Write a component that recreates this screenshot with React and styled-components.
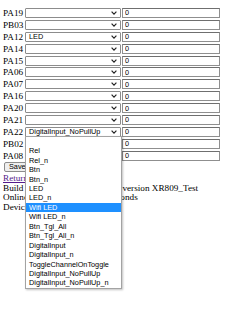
import React from 'react';
import styled, { createGlobalStyle } from 'styled-components';

const GlobalStyle = createGlobalStyle`
  html, body {
    margin: 0;
    padding: 0;
    background: #fff;
  }
  body {
    font-family: 'Liberation Serif', 'Times New Roman', serif;
    font-size: 9.2px;
    color: #000;
  }
`;

const Page = styled.div`
  box-sizing: border-box;
  min-height: 315px;
  padding: 7px 0 0 3px;
`;

const PinList = styled.div`
  display: flex;
  flex-direction: column;
`;

const PinRow = styled.div`
  display: flex;
  align-items: center;
  height: 11.9px;
`;

const PinLabel = styled.span`
  width: 22px;
  white-space: nowrap;
`;

const SelectBox = styled.div`
  position: relative;
  box-sizing: border-box;
  width: 96px;
  height: 10px;
  border: 1px solid #8c8c8c;
  border-radius: 1px;
  background: #fff;
  display: flex;
  align-items: center;
  padding-left: 3px;
  font-family: 'Liberation Sans', Arial, sans-serif;
  font-size: 7.3px;
  color: #000;
`;

const SelectValue = styled.span`
  flex: 1;
  white-space: nowrap;
`;

const Chevron = styled.svg`
  width: 6px;
  height: 4px;
  margin-right: 3px;
`;

const ValueInput = styled.input`
  box-sizing: border-box;
  width: 98px;
  height: 10px;
  margin: 0 0 0 1px;
  padding: 0 2px;
  border: 1px solid #8f8f8f;
  border-top-color: #6f6f6f;
  font-family: 'Liberation Sans', Arial, sans-serif;
  font-size: 7.3px;
  color: #000;
  background: #fff;
  outline: none;
`;

const Popup = styled.ul`
  position: absolute;
  z-index: 10;
  top: 100%;
  left: -1px;
  box-sizing: border-box;
  width: 97px;
  margin: 0;
  padding: 0;
  list-style: none;
  background: #fff;
  border: 1px solid #a3a3a3;
  box-shadow: 1px 1px 2px rgba(0, 0, 0, 0.25);
`;

const Option = styled.li`
  height: 9.45px;
  line-height: 9.45px;
  padding-left: 3px;
  white-space: nowrap;
  background: ${p => (p.$active ? '#1e90ff' : 'transparent')};
  color: ${p => (p.$active ? '#fff' : '#000')};
`;

const ButtonLine = styled.div`
  display: flex;
  align-items: flex-start;
  height: 12.5px;
  padding-left: 1px;
`;

const SaveButton = styled.button`
  box-sizing: border-box;
  height: 10px;
  margin: 0;
  padding: 0 4px;
  border: 1px solid #8c8c8c;
  border-radius: 2px;
  background: #efefef;
  font-family: 'Liberation Sans', Arial, sans-serif;
  font-size: 7.3px;
  line-height: 8px;
  color: #000;
`;

const TextLine = styled.div`
  height: 9.5px;
  line-height: 9.5px;
  white-space: nowrap;
`;

const ReturnLink = styled.a`
  color: #551a8b;
  text-decoration: underline;
`;

const roles = [
  '',
  'Rel',
  'Rel_n',
  'Btn',
  'Btn_n',
  'LED',
  'LED_n',
  'Wifi LED',
  'Wifi LED_n',
  'Btn_Tgl_All',
  'Btn_Tgl_All_n',
  'DigitalInput',
  'DigitalInput_n',
  'ToggleChannelOnToggle',
  'DigitalInput_NoPullUp',
  'DigitalInput_NoPullUp_n',
];

const pins = [
  { name: 'PA19', role: '' },
  { name: 'PB03', role: '' },
  { name: 'PA12', role: 'LED' },
  { name: 'PA14', role: '' },
  { name: 'PA15', role: '' },
  { name: 'PA06', role: '' },
  { name: 'PA07', role: '' },
  { name: 'PA16', role: '' },
  { name: 'PA20', role: '' },
  { name: 'PA21', role: '' },
  { name: 'PA22', role: 'DigitalInput_NoPullUp', open: true },
  { name: 'PB02', role: '' },
  { name: 'PA08', role: '' },
];

const RoleSelect = ({ role, open }) => (
  <SelectBox>
    <SelectValue>{role}</SelectValue>
    <Chevron viewBox="0 0 6 4">
      <path d="M0.6 0.7 L3 3.1 L5.4 0.7" fill="none" stroke="#222" strokeWidth="1.2" />
    </Chevron>
    {open && (
      <Popup>
        {roles.map((r, i) => (
          <Option key={i} $active={r === 'Wifi LED'}>{r}</Option>
        ))}
      </Popup>
    )}
  </SelectBox>
);

export default function App() {
  return (
    <Page>
      <GlobalStyle />
      <PinList>
        {pins.map(p => (
          <PinRow key={p.name}>
            <PinLabel>{p.name}</PinLabel>
            <RoleSelect role={p.role} open={p.open} />
            <ValueInput defaultValue="0" readOnly />
          </PinRow>
        ))}
      </PinList>
      <ButtonLine>
        <SaveButton>Save</SaveButton>
      </ButtonLine>
      <TextLine>
        <ReturnLink href="#">Return to menu</ReturnLink>
      </TextLine>
      <TextLine>Build on Nov 10 2022 13:45:12 version XR809_Test</TextLine>
      <TextLine>Online for 2 minutes and 15 seconds</TextLine>
      <TextLine>Device name: OpenXR809</TextLine>
    </Page>
  );
}
